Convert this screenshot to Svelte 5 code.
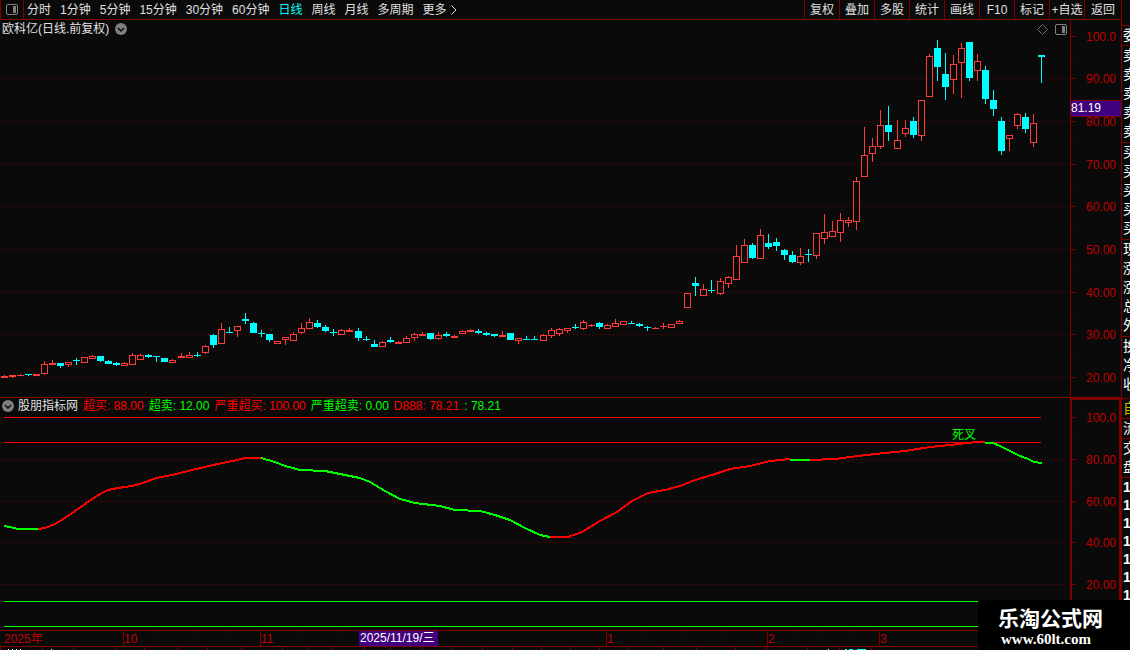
<script lang="ts">
  const periods = ['分时', '1分钟', '5分钟', '15分钟', '30分钟', '60分钟', '日线', '周线', '月线', '多周期', '更多'];
  const tools = ['复权', '叠加', '多股', '统计', '画线', 'F10', '标记', '+自选', '返回'];
  let active = $state('日线');

  // One candle per trading day: [rising, high, body top, body bottom, low] in plot units.
  const candles = [
    [1, 375, 376, 378, 378], [1, 375, 375, 377, 378], [1, 374, 375, 376, 376], [0, 374, 374, 375, 376],
    [1, 374, 374, 376, 376], [1, 361, 364, 374, 375], [1, 360, 363, 365, 365], [0, 363, 363, 366, 368],
    [1, 362, 362, 365, 367], [0, 358, 360, 361, 365], [1, 357, 357, 363, 363], [1, 355, 356, 359, 359],
    [0, 356, 356, 361, 362], [0, 360, 361, 364, 364], [0, 362, 363, 365, 366], [1, 362, 363, 366, 366],
    [1, 353, 355, 365, 365], [1, 354, 355, 360, 360], [0, 354, 355, 357, 358], [0, 356, 356, 357, 362],
    [0, 358, 358, 362, 362], [1, 359, 360, 363, 363], [1, 353, 356, 358, 358], [1, 352, 355, 358, 358],
    [0, 352, 355, 356, 357], [1, 345, 346, 353, 354], [0, 334, 335, 345, 348], [1, 323, 329, 344, 344],
    [0, 327, 332, 333, 333], [1, 326, 326, 331, 337], [0, 313, 319, 321, 324], [0, 322, 323, 333, 333],
    [0, 330, 333, 334, 337], [0, 334, 334, 340, 342], [1, 341, 341, 344, 344], [1, 337, 337, 340, 345],
    [1, 332, 334, 341, 341], [1, 323, 328, 333, 334], [1, 318, 322, 329, 329], [0, 320, 323, 327, 328],
    [0, 325, 327, 331, 332], [0, 329, 332, 333, 336], [1, 329, 330, 335, 335], [1, 328, 330, 332, 332],
    [0, 328, 331, 338, 341], [0, 336, 339, 340, 341], [0, 340, 344, 347, 347], [1, 341, 342, 347, 347],
    [0, 337, 340, 342, 343], [1, 341, 342, 344, 344], [1, 336, 338, 343, 343], [1, 333, 334, 338, 341],
    [1, 332, 334, 336, 336], [0, 333, 333, 339, 340], [1, 332, 335, 339, 340], [0, 332, 334, 336, 337],
    [1, 335, 336, 338, 338], [1, 330, 331, 334, 334], [1, 329, 330, 332, 332], [0, 329, 331, 333, 334],
    [0, 332, 333, 335, 336], [0, 334, 334, 336, 337], [1, 331, 335, 337, 337], [0, 333, 333, 340, 340],
    [1, 338, 338, 341, 344], [0, 336, 339, 340, 340], [0, 336, 339, 340, 340], [1, 334, 335, 341, 341],
    [1, 328, 330, 336, 338], [1, 328, 329, 334, 336], [1, 328, 328, 331, 333], [0, 324, 327, 328, 329],
    [1, 320, 322, 329, 330], [1, 324, 325, 326, 327], [0, 322, 323, 327, 329], [1, 324, 325, 329, 329],
    [1, 319, 323, 327, 327], [1, 321, 321, 325, 325], [0, 321, 323, 324, 324], [0, 323, 324, 326, 327],
    [0, 326, 327, 328, 331], [1, 327, 328, 329, 329], [1, 323, 326, 327, 329], [1, 324, 324, 328, 328],
    [1, 320, 321, 324, 324], [1, 293, 293, 308, 308], [0, 277, 283, 286, 296], [1, 284, 289, 296, 296],
    [0, 280, 290, 291, 293], [1, 278, 281, 294, 295], [1, 276, 277, 284, 288], [1, 245, 256, 280, 280],
    [1, 239, 245, 263, 263], [0, 243, 245, 258, 259], [1, 229, 235, 259, 259], [0, 234, 243, 247, 249],
    [0, 238, 242, 246, 251], [0, 249, 250, 255, 260], [0, 251, 255, 262, 263], [1, 248, 256, 263, 265],
    [0, 249, 254, 255, 262], [1, 233, 233, 256, 259], [1, 214, 232, 239, 244], [1, 221, 231, 237, 237],
    [1, 213, 220, 233, 242], [1, 217, 220, 223, 227], [1, 177, 181, 222, 230], [1, 127, 155, 177, 177],
    [1, 138, 146, 154, 162], [1, 110, 125, 147, 149], [0, 106, 125, 132, 141], [1, 120, 140, 149, 149],
    [1, 120, 128, 134, 137], [0, 117, 121, 135, 138], [1, 100, 100, 136, 141], [1, 54, 56, 97, 97],
    [0, 40, 48, 67, 81], [0, 53, 74, 87, 100], [1, 55, 64, 80, 94], [1, 43, 48, 63, 98],
    [0, 42, 42, 78, 81], [1, 54, 61, 71, 81], [0, 66, 70, 99, 104], [0, 90, 100, 109, 116],
    [0, 117, 121, 151, 155], [1, 135, 135, 139, 151], [1, 113, 114, 126, 129], [0, 113, 117, 129, 133],
    [1, 114, 123, 143, 147], [0, 55, 55, 57, 83]
  ];
  const step = 8.045;
  const centre = (i: number) => 4 + Math.floor(i * step + 0.025);

  const priceTicks = [
    [36, '100.0'], [78, '90.00'], [121, '80.00'], [164, '70.00'], [206, '60.00'],
    [249, '50.00'], [292, '40.00'], [334, '30.00'], [377, '20.00']
  ] as [number, string][];
  const priceMinor = [57, 100, 143, 185, 228, 271, 313, 356];
  const levelTicks = [
    [417, '100.0'], [459, '80.00'], [501, '60.00'], [542, '40.00'], [584, '20.00']
  ] as [number, string][];
  const levelMinor = [438, 480, 522, 563];

  const values = [
    ['超买: 88.00', 'red'], ['超卖: 12.00', 'green'], ['严重超买: 100.00', 'red'],
    ['严重超卖: 0.00', 'green'], ['D888: 78.21', 'red'], [': 78.21', 'green']
  ];

  // Momentum line, split where it changes direction
  const curve = [
    ['#00ff00', '4,526 10,527 18,529 38,529'],
    ['#ff0000', '38,529 45,528 55,524 65,518 75,511 85,504 95,497 102,493 108,490 118,488 132,486 143,483 156,478 172,475 188,471 205,467 222,463 233,461 245,458 261,458'],
    ['#00ff00', '261,458 275,462 285,466 300,470 325,471 345,475 360,478 370,482 385,491 400,499 415,503 440,506 455,510 480,511 495,515 510,520 525,528 540,535 550,537'],
    ['#ff0000', '550,537 568,537 582,532 600,521 617,512 632,501 648,493 665,490 680,486 695,480 712,475 730,469 750,466 770,461 790,459'],
    ['#00ff00', '790,460 810,460'],
    ['#ff0000', '810,460 835,459 850,457 875,454 905,451 930,447 950,445 977,442 985,442'],
    ['#00ff00', '985,443 993,443 1000,446 1010,451 1020,456 1028,459 1034,462 1042,463']
  ];

  const months = [[123, '10'], [260, '11'], [606, '1'], [767, '2'], [879, '3']] as [number, string][];
  const weeks = [157, 192, 226, 300, 341, 646, 687, 727, 795, 823, 851];
  const statusCells = [0, 42, 73, 115, 144, 177, 207, 241, 282, 308, 332, 364, 390, 422, 452, 482, 512, 541, 570, 599, 628, 663, 696, 735, 766, 807, 839, 871];

  const quote = [
    ['委'],
    ['卖', '卖', '卖', '卖', '卖'],
    ['买', '买', '买', '买', '买'],
    ['现', '涨', '涨', '总', '外'],
    ['换', '净', '收'],
    ['自'],
    ['流'],
    ['交', '盘'],
    ['1', '1', '1', '1', '1', '1', '1']
  ];
</script>

{#snippet chevron()}
  <svg class="chevron" viewBox="0 0 12 12" aria-hidden="true">
    <circle cx="6" cy="6" r="6" fill="#808080" />
    <path d="M3 5l3 3 3-3" fill="none" stroke="#0a0a0a" stroke-width="1.5" />
  </svg>
{/snippet}

{#snippet panelIcon()}
  <svg class="panel-icon" viewBox="0 0 12 11" aria-hidden="true">
    <rect x="0.5" y="0.5" width="11" height="10" rx="1.5" fill="none" stroke="#808080" />
    <rect x="7" y="2" width="3" height="7" fill="#808080" />
  </svg>
{/snippet}

<div class="app">
  <div class="workspace">
    <header>
      <button class="toggle" aria-label="侧栏">{@render panelIcon()}</button>
      <nav class="periods">
        {#each periods as p}
          <button class:active={active === p} onclick={() => (active = p)}>{p}</button>
        {/each}
        <svg class="more" viewBox="0 0 6 10" aria-hidden="true">
          <path d="M0.5 0.5L5 5L0.5 9.5" fill="none" stroke="#e0e0e0" />
        </svg>
      </nav>
      <div class="tools">
        {#each tools as t}
          <button>{t}</button>
        {/each}
      </div>
    </header>

    <section class="pane price">
      <div class="plot">
        <svg viewBox="0 20 1070 377" preserveAspectRatio="none" shape-rendering="crispEdges" role="img" aria-label="日线">
          {#each priceTicks.slice(1) as [y]}
            <line x1="1" x2="1068" y1={y + 0.5} y2={y + 0.5} class="dots" />
          {/each}
          {#each candles as [up, high, top, bottom, low], i}
            {@const x = centre(i)}
            {#if up}
              <g fill="#ff3c3c">
                <rect {x} y={high} width="1" height={top - high} />
                <rect {x} y={bottom} width="1" height={low - bottom} />
                {#if bottom - top < 3}
                  <rect x={x - 3} y={top} width="7" height={bottom - top} />
                {:else}
                  <rect x={x - 2.5} y={top + 0.5} width="6" height={bottom - top - 1} fill="#0a0a0a" stroke="#ff3c3c" />
                {/if}
              </g>
            {:else}
              <g fill="#00ffff">
                <rect {x} y={high} width="1" height={low - high} />
                <rect x={x - 3} y={top} width="7" height={bottom - top} />
              </g>
            {/if}
          {/each}
        </svg>
        <div class="title">
          <span>欧科亿(日线.前复权)</span>
          {@render chevron()}
        </div>
        <div class="corner">
          <svg class="diamond" viewBox="0 0 11 11" aria-hidden="true">
            <path d="M5.5 0.5L10.5 5.5L5.5 10.5L0.5 5.5Z" fill="none" stroke="#707070" />
          </svg>
          {@render panelIcon()}
        </div>
      </div>
      <svg class="axis" viewBox="0 20 51 377" shape-rendering="crispEdges">
        <rect x="0" y="20" width="1" height="377" fill="#800000" />
        {#each priceTicks as [y, label]}
          <rect x="1" {y} width="5" height="1" fill="#800000" />
          <text x="46" y={y + 5} text-anchor="end">{label}</text>
        {/each}
        {#each priceMinor as y}
          <rect x="1" {y} width="2" height="1" fill="#800000" />
        {/each}
        <rect x="1" y="100" width="50" height="17" fill="#800000" />
        <rect x="1" y="101" width="50" height="15" fill="#400080" />
        <text x="1" y="112" class="current">81.19</text>
      </svg>
    </section>

    <section class="pane level">
      <div class="plot">
        <svg viewBox="0 398 1070 232" preserveAspectRatio="none" shape-rendering="crispEdges" role="img" aria-label="股朋指标网">
          {#each levelTicks.slice(1) as [y]}
            <line x1="1" x2="1068" y1={y + 0.5} y2={y + 0.5} class="dots" />
          {/each}
          <rect x="4" y="417" width="1037" height="1" fill="#ff0000" />
          <rect x="4" y="442" width="1037" height="1" fill="#ff0000" />
          <rect x="4" y="601" width="1037" height="1" fill="#00ff00" />
          <rect x="4" y="626" width="1037" height="1" fill="#00ff00" />
          {#each curve as [color, points]}
            <polyline {points} fill="none" stroke={color} stroke-width="2" />
          {/each}
          <text x="952" y="439" class="cross">死叉</text>
        </svg>
        <div class="title values">
          {@render chevron()}
          <span class="name">股朋指标网</span>
          {#each values as [text, tone]}
            <span class={tone}>{text}</span>
          {/each}
        </div>
      </div>
      <svg class="axis" viewBox="0 398 51 232" shape-rendering="crispEdges">
        <rect x="1" y="399" width="49" height="240" fill="none" stroke="#800000" stroke-width="2" />
        {#each levelTicks as [y, label]}
          <rect x="1" {y} width="5" height="1" fill="#800000" />
          <text x="46" y={y + 5} text-anchor="end">{label}</text>
        {/each}
        {#each levelMinor as y}
          <rect x="1" {y} width="2" height="1" fill="#800000" />
        {/each}
      </svg>
    </section>

    <svg class="time" viewBox="0 630 1121 20" preserveAspectRatio="none" shape-rendering="crispEdges">
      <rect y="630" width="1121" height="1" fill="#800000" />
      <rect y="646" width="1121" height="1" fill="#800000" />
      <text x="4" y="643">2025年</text>
      {#each months as [x, label]}
        <rect {x} y="630" width="1" height="16" fill="#800000" />
        <text x={x + 1} y="643">{label}</text>
      {/each}
      {#each weeks as x}
        <rect {x} y="631" width="1" height="2" fill="#800000" />
      {/each}
      <rect x="359" y="631" width="79" height="15" fill="#400080" />
      <text x="360" y="642" class="current">2025/11/19/三</text>
      {#each statusCells as x}
        <rect {x} y="647" width="1" height="3" fill="#800000" />
      {/each}
      <path d="M8 649.5h1M12 649.5h1M16 649.5h1M20 649.5h1M51 649.5h1M828 649.5h1" stroke="#e0e0e0" />
      <path d="M845 649.5h2M849 649.5h4M857 649.5h9" stroke="#00ffff" />
    </svg>
  </div>

  <aside>
    {#each quote as group, i}
      <div class="group g{i}">
        {#each group as row}
          <span>{row}</span>
        {/each}
      </div>
    {/each}
  </aside>

  <div class="brand">
    <strong>乐淘公式网</strong>
    <span>www.60lt.com</span>
  </div>
</div>

<style>
  :global(body) {
    background: #0a0a0a;
  }
  .app {
    position: relative;
    display: flex;
    overflow: hidden;
    background: #0a0a0a;
    color: #e0e0e0;
    font: 12px/16px 'Liberation Sans', 'Noto Sans CJK SC', sans-serif;
  }
  .workspace {
    flex: 1;
    min-width: 0;
  }
  svg {
    display: block;
  }
  button {
    padding: 0;
    border: 0;
    background: none;
    color: inherit;
    font: inherit;
    white-space: nowrap;
  }
  header {
    display: flex;
    height: 19px;
    border-bottom: 1px solid #800000;
  }
  .toggle {
    display: flex;
    align-items: center;
    justify-content: center;
    width: 24px;
    box-sizing: border-box;
    border: solid #800000;
    border-width: 0 1px;
  }
  .panel-icon {
    width: 12px;
    height: 11px;
  }
  .periods {
    display: flex;
    align-items: center;
    gap: 9px;
    padding-left: 3px;
  }
  .periods .active {
    color: #00ffff;
  }
  .more {
    width: 6px;
    height: 10px;
    margin-left: -5px;
  }
  .tools {
    display: flex;
    margin-left: auto;
  }
  .tools button {
    box-sizing: border-box;
    width: 35px;
    border-left: 1px solid #800000;
  }
  .tools button:last-child {
    width: 37px;
  }
  .pane {
    display: grid;
    grid-template-columns: minmax(0, 1fr) 51px;
  }
  .price {
    border-bottom: 1px solid #800000;
  }
  .plot {
    position: relative;
  }
  .plot > svg {
    width: 100%;
  }
  .price > svg,
  .price .plot > svg {
    height: 377px;
  }
  .level > svg,
  .level .plot > svg {
    height: 232px;
  }
  .axis {
    width: 51px;
  }
  .dots {
    stroke: #800000;
    stroke-dasharray: 1 3;
  }
  text {
    fill: #c00000;
    font-size: 12px;
  }
  text.current {
    fill: #ffffff;
  }
  text.cross {
    fill: #00ff00;
  }
  .title {
    position: absolute;
    top: 1px;
    left: 2px;
    display: flex;
    align-items: center;
    gap: 6px;
    white-space: nowrap;
  }
  .values {
    top: 0;
    gap: 5px;
  }
  .name {
    margin-left: -1px;
  }
  .chevron {
    width: 12px;
    height: 12px;
  }
  .red {
    color: #ff0000;
  }
  .green {
    color: #00ff00;
  }
  .corner {
    position: absolute;
    top: 4px;
    right: 3px;
    display: flex;
    gap: 7px;
  }
  .diamond {
    width: 11px;
    height: 11px;
  }
  .time {
    width: 100%;
    height: 20px;
  }
  /* Quote strip, mostly scrolled off to the right */
  aside {
    box-sizing: border-box;
    width: 9px;
    overflow: hidden;
    padding-top: 25px;
    border-left: 1px solid #800000;
    font-size: 14px;
    color: #ffffff;
  }
  .group {
    display: flex;
    flex-direction: column;
    border-top: 1px solid #800000;
  }
  .group span {
    height: 19px;
    padding-left: 1px;
    line-height: 19px;
  }
  .g1,
  .g2,
  .g3 {
    padding-bottom: 1px;
  }
  .g4 {
    padding-bottom: 4px;
  }
  .g5 {
    color: #c0c000;
  }
  .g8 span {
    height: 18px;
    font-weight: bold;
  }
  .brand {
    position: absolute;
    right: 0;
    bottom: 0;
    display: flex;
    flex-direction: column;
    box-sizing: border-box;
    width: 152px;
    height: 50px;
    padding: 8px 0 0 20px;
    background: #000000;
    color: #ffffff;
  }
  .brand strong {
    font-size: 21px;
    line-height: 22px;
  }
  .brand span {
    padding-left: 3px;
    font: bold 15px/18px 'Liberation Serif', serif;
  }
</style>
